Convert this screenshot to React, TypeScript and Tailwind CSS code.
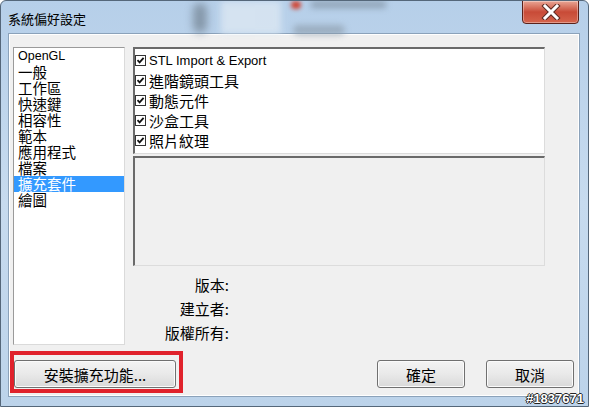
import React from 'react';

const cjk = '"Noto Sans CJK TC", "Noto Sans", sans-serif';

const categories = ['OpenGL', '一般', '工作區', '快速鍵', '相容性', '範本', '應用程式', '檔案', '擴充套件', '繪圖'];
const plugins = ['STL Import & Export', '進階鏡頭工具', '動態元件', '沙盒工具', '照片紋理'];
const infoLabels = ['版本:', '建立者:', '版權所有:'];

const CheckBox = () => (
    <span className="w-[11px] h-[11px] border border-[#333] bg-white flex items-center justify-center shrink-0">
        <svg width="9" height="9" viewBox="0 0 9 9">
            <path d="M1.5 4.2 L3.6 6.4 L7.6 1.8" fill="none" stroke="#111" strokeWidth="1.8" />
        </svg>
    </span>
);

const WinButton = ({ label, width }: { label: string; width: string }) => (
    <button
        className={`${width} h-[28px] border border-[#707070] rounded-[3px] bg-linear-to-b from-[#f4f4f4] via-[#e9e9e9] to-[#d9d9d9] text-[15px] leading-none text-black flex items-center justify-center shadow-[inset_0_0_0_1px_#fbfbfb]`}
    >
        {label}
    </button>
);

const App = () => {
    return (
        <div
            className="relative w-[589px] h-[407px] overflow-hidden bg-linear-to-b from-[#b6cfe9] via-[#c7dbef] to-[#bcd3ea] border border-[#55677a] rounded-t-[6px] flex flex-col"
            style={{ fontFamily: cjk }}
        >
            {/* blurred desktop behind the glass title bar */}
            <div className="absolute left-[192px] top-[2px] w-[14px] h-[30px] rounded-full bg-[#6f7f8e] blur-[4px] opacity-70" />
            <div className="absolute left-[220px] top-0 w-[60px] h-[33px] bg-[#e1ebf4] blur-[3px] opacity-70" />
            <div className="absolute left-[290px] top-0 w-[10px] h-[8px] rounded-full bg-[#d04838] blur-[2px]" />
            <div className="absolute left-[310px] top-0 w-[75px] h-[7px] bg-[#7f8fa0] blur-[3px] opacity-70" />
            <div className="absolute left-[292px] top-[24px] w-[52px] h-[10px] rounded-full bg-[#8796a4] blur-[3px] opacity-60" />

            {/* title bar */}
            <div className="relative h-[32px] flex items-start justify-between pl-[7px] pr-[9px]">
                <span className="mt-[10px] text-[13px] leading-[16px] text-black">系統偏好設定</span>
                <div className="w-[57px] h-[24px] -mt-px rounded-b-[4px] border border-[#5a2119] bg-linear-to-b from-[#e8a595] via-[#c84a37] to-[#d5644c] flex items-center justify-center shadow-[inset_0_0_0_1px_rgba(255,255,255,0.35)]">
                    <svg width="20" height="16" viewBox="0 0 20 16">
                        <path d="M4 2 L16 14 M16 2 L4 14" stroke="#5b2a22" strokeWidth="5" strokeLinecap="square" />
                        <path d="M4 2 L16 14 M16 2 L4 14" stroke="#ffffff" strokeWidth="3" strokeLinecap="square" />
                    </svg>
                </div>
            </div>

            {/* client area */}
            <div className="ml-[7px] mr-[8px] h-[364px] border border-[#8ba2ba] bg-[#f0f0f0] flex flex-col pt-[13px] pl-[4px] shadow-[inset_0_0_0_1px_#ffffff]">
                <div className="flex gap-[8px]">
                    {/* category list */}
                    <div className="w-[112px] h-[298px] bg-white border border-[#9a9a9a] border-b-[#dadada] border-r-[#dadada] flex flex-col">
                        {categories.map((c) => (
                            <div
                                key={c}
                                className={`h-[16px] pl-[4px] flex items-center text-[14.5px] leading-[14px] whitespace-nowrap ${c === '擴充套件' ? 'bg-[#3399ff] text-white' : 'text-black'}`}
                                style={c === 'OpenGL' ? { fontFamily: '"Liberation Sans", sans-serif', fontSize: '12.5px' } : undefined}
                            >
                                {c}
                            </div>
                        ))}
                    </div>

                    {/* right column */}
                    <div className="w-[412px] flex flex-col">
                        <div className="h-[107px] bg-white border-t-2 border-l-2 border-[#6a6a6a] border-r border-b border-r-[#dcdcdc] border-b-[#dcdcdc] flex flex-col pt-[1px]">
                            {plugins.map((p, i) => (
                                <div key={p} className="h-[20px] flex items-center gap-[3px]">
                                    <CheckBox />
                                    <span
                                        className="text-[15px] leading-none text-black whitespace-nowrap"
                                        style={i === 0 ? { fontFamily: '"Liberation Sans", sans-serif', fontSize: '13px' } : undefined}
                                    >
                                        {p}
                                    </span>
                                </div>
                            ))}
                        </div>
                        <div className="mt-[2px] h-[110px] bg-[#f0f0f0] border-t-2 border-l-2 border-[#6a6a6a] border-r border-b border-r-[#dcdcdc] border-b-[#dcdcdc]" />
                        <div className="mt-[6px] w-[96px] flex flex-col items-end">
                            {infoLabels.map((l) => (
                                <div key={l} className="h-[24px] flex items-center text-[15px] leading-none text-black whitespace-nowrap">
                                    {l}
                                </div>
                            ))}
                        </div>
                    </div>
                </div>

                {/* buttons */}
                <div className="mt-[15px] flex items-center pr-[5px]">
                    <div className="relative ml-[1px]">
                        <WinButton label="安裝擴充功能..." width="w-[162px]" />
                        <div className="absolute -left-[4px] -right-[7px] -top-[9px] -bottom-[5px] border-4 border-[#e0222c] pointer-events-none" />
                    </div>
                    <div className="ml-auto flex gap-[21px]">
                        <WinButton label="確定" width="w-[88px]" />
                        <WinButton label="取消" width="w-[88px]" />
                    </div>
                </div>
            </div>

            {/* watermark */}
            <span
                className="absolute right-[4px] bottom-[0px] text-[13px] font-bold leading-[14px] text-white"
                style={{ fontFamily: '"Liberation Sans", sans-serif', textShadow: '1px 0 #222, -1px 0 #222, 0 1px #222, 0 -1px #222' }}
            >
                #1837671
            </span>
        </div>
    );
};

export default App;
